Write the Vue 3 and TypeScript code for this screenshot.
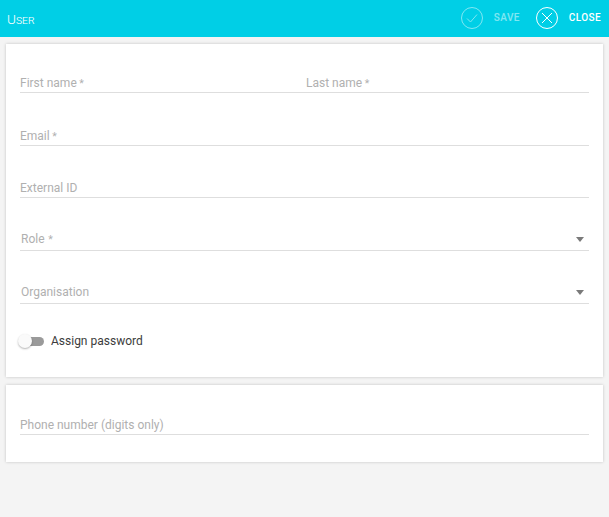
<script setup lang="ts">
</script>

<template>
  <div class="page">
    <header class="bar">
      <div class="title">User</div>
      <div class="actions">
        <button class="action off">
          <svg width="22" height="22" viewBox="0 0 22 22" fill="none" stroke="#fff" stroke-width="1">
            <circle cx="11" cy="11" r="10.5" />
            <path d="M6 11.5l3.5 3.5L16 7.5" />
          </svg>
          <span>SAVE</span>
        </button>
        <button class="action">
          <svg width="22" height="22" viewBox="0 0 22 22" fill="none" stroke="#fff" stroke-width="1">
            <circle cx="11" cy="11" r="10.5" />
            <path d="M6 6l10 10M16 6L6 16" />
          </svg>
          <span>CLOSE</span>
        </button>
      </div>
    </header>
    <main class="content">
      <section class="card first">
        <div class="row two">
          <div class="field"><span>First name<span class="req"> *</span></span></div>
          <div class="field"><span>Last name<span class="req"> *</span></span></div>
        </div>
        <div class="row"><div class="field"><span>Email<span class="req"> *</span></span></div></div>
        <div class="row"><div class="field"><span>External ID</span></div></div>
        <div class="row"><div class="field select"><span>Role<span class="req"> *</span></span><i class="arrow"></i></div></div>
        <div class="row"><div class="field select"><span>Organisation</span><i class="arrow"></i></div></div>
        <div class="toggle">
          <div class="track"><div class="thumb"></div></div>
          <span>Assign password</span>
        </div>
      </section>
      <section class="card second">
        <div class="row"><div class="field"><span>Phone number (digits only)</span></div></div>
      </section>
    </main>
  </div>
</template>

<style>
html, body { margin: 0; background: #f4f4f4; }
</style>

<style scoped>
.page {
  width: 609px;
  height: 517px;
  background: #f4f4f4;
  font-family: Roboto, "Liberation Sans", sans-serif;
  overflow: hidden;
}
.bar {
  height: 37px;
  background: #00cfe6;
  display: flex;
  align-items: center;
  justify-content: space-between;
  padding: 0 8px 0 7px;
  color: #fff;
}
.title {
  font-variant: small-caps;
  font-size: 12px;
  font-weight: 300;
}
.title::first-letter { font-size: 13.5px; }
.actions { display: flex; gap: 16px; margin-bottom: 2px; }
.action {
  display: flex;
  align-items: center;
  gap: 11px;
  border: 0;
  padding: 0;
  background: none;
  color: #fff;
  font: 500 10px Roboto, sans-serif;
  letter-spacing: 0.4px;
}
.action.off { opacity: 0.5; }
.content {
  padding: 7px 6px 0;
  display: flex;
  flex-direction: column;
  gap: 8px;
}
.card {
  background: #fff;
  box-shadow: 0 0 3px rgba(0, 0, 0, 0.2);
  padding: 0 14px;
}
.first { height: 333px; padding-top: 1px; box-sizing: border-box; }
.second { height: 77px; box-sizing: border-box; }
.row { display: flex; height: 52.7px; }
.two .field:first-child { flex: 0 0 286px; }
.field {
  flex: 1;
  margin-top: 21px;
  height: 27px;
  border-bottom: 1px solid #dedede;
  color: #b0b0b0;
  font-size: 12px;
  font-weight: 400;
  line-height: 16px;
  box-sizing: border-box;
  padding-top: 9px;
  display: flex;
  justify-content: space-between;
}
.req { font-size: 10.5px; }
.field.select { padding-top: 7px; }
.select span { padding-left: 1px; }
.arrow {
  width: 0;
  height: 0;
  border-left: 4px solid transparent;
  border-right: 4px solid transparent;
  border-top: 5px solid #7a7a7a;
  margin: 6px 5px 0 0;
}
.toggle {
  display: flex;
  align-items: center;
  gap: 7px;
  margin-top: 26px;
  font-size: 12px;
  color: #3c3c3c;
}
.track {
  width: 24px;
  height: 9px;
  border-radius: 5px;
  background: #9a9a9a;
  position: relative;
}
.thumb {
  position: absolute;
  left: -2px;
  top: -3px;
  width: 14px;
  height: 14px;
  border-radius: 50%;
  background: #fafafa;
  box-shadow: 0 1px 2px rgba(0, 0, 0, 0.3);
}
.second .row { margin-top: 2px; }
</style>
